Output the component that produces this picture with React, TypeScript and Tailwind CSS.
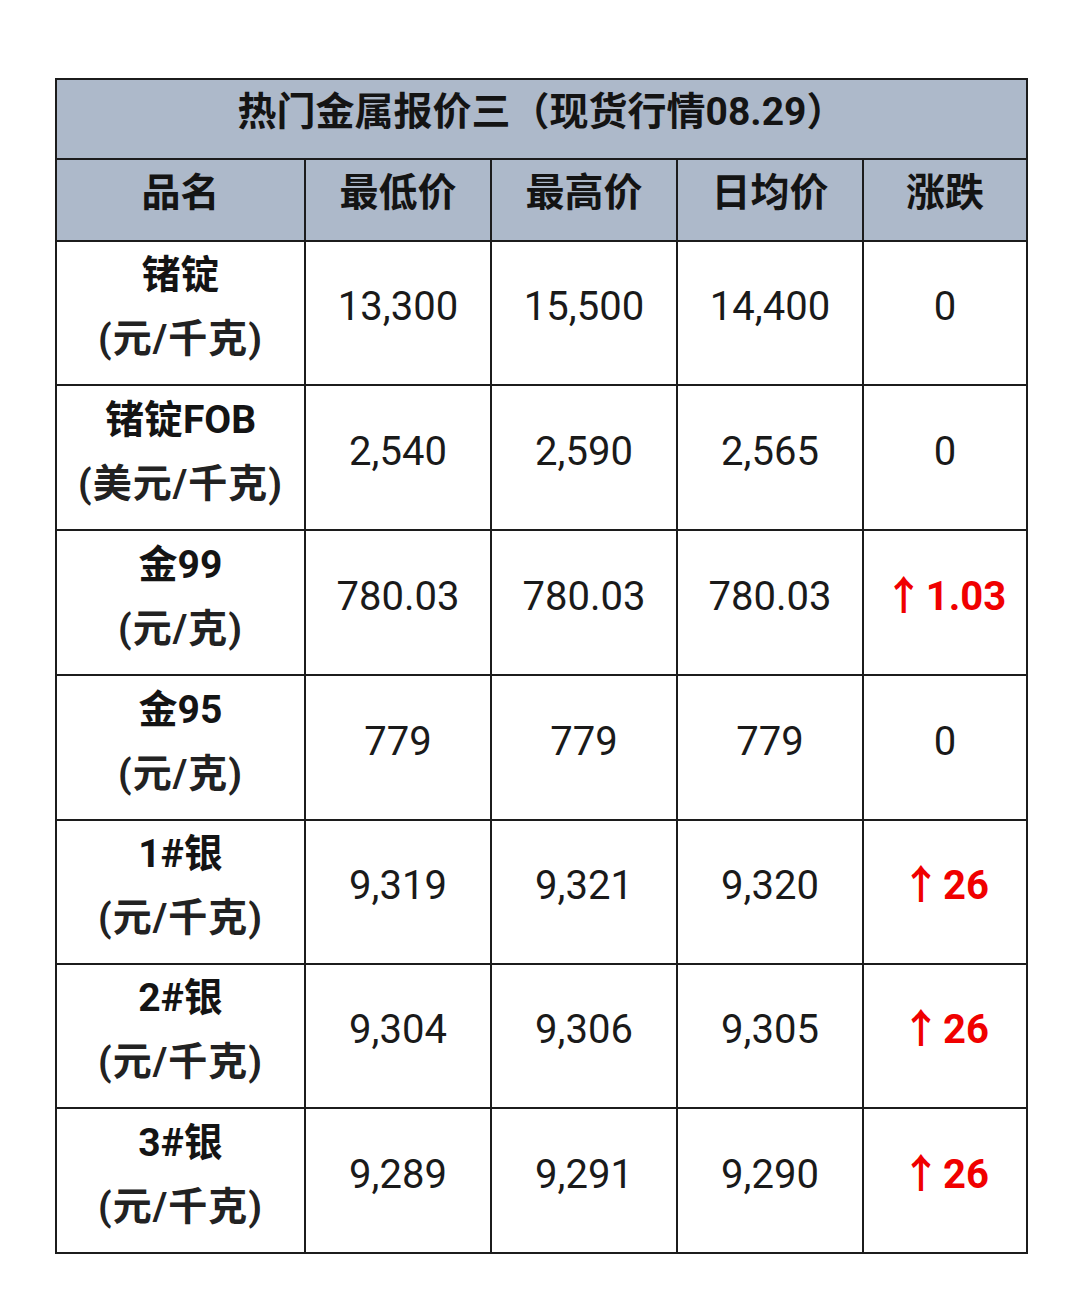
const rows = [
  { name: "锗锭", unit: "(元/千克)", low: "13,300", high: "15,500", avg: "14,400", chg: "0", h: "h-[144px]" },
  { name: "锗锭FOB", unit: "(美元/千克)", low: "2,540", high: "2,590", avg: "2,565", chg: "0", h: "h-[145px]" },
  { name: "金99", unit: "(元/克)", low: "780.03", high: "780.03", avg: "780.03", chg: "1.03", up: true, h: "h-[145px]" },
  { name: "金95", unit: "(元/克)", low: "779", high: "779", avg: "779", chg: "0", h: "h-[145px]" },
  { name: "1#银", unit: "(元/千克)", low: "9,319", high: "9,321", avg: "9,320", chg: "26", up: true, h: "h-[144px]" },
  { name: "2#银", unit: "(元/千克)", low: "9,304", high: "9,306", avg: "9,305", chg: "26", up: true, h: "h-[144px]" },
  { name: "3#银", unit: "(元/千克)", low: "9,289", high: "9,291", avg: "9,290", chg: "26", up: true, h: "h-[145px]" },
];

const font = "font-['Roboto','Noto_Sans_CJK_SC',sans-serif]";
const cell = "border-2 border-[#1c1c1c] text-center";

export default function App() {
  return (
    <div className={`w-[1080px] h-[1300px] bg-white pt-[78px] pl-[55px] ${font}`}>
      <table className="border-collapse border-2 border-[#1c1c1c] w-[971px] table-fixed text-[#141414]">
        <colgroup>
          <col className="w-[249px]" />
          <col className="w-[186px]" />
          <col className="w-[186px]" />
          <col className="w-[186px]" />
          <col className="w-[164px]" />
        </colgroup>
        <thead>
          <tr className="h-[80px] bg-[#adb9ca]">
            <th colSpan={5} className={`${cell} pb-[14px] text-[39px] font-bold`}>
              热门金属报价三（现货行情08.29）
            </th>
          </tr>
          <tr className="h-[82px] bg-[#adb9ca]">
            {["品名", "最低价", "最高价", "日均价", "涨跌"].map((h) => (
              <th key={h} className={`${cell} pb-[14px] text-[39px] font-bold`}>
                {h}
              </th>
            ))}
          </tr>
        </thead>
        <tbody>
          {rows.map((r) => (
            <tr key={r.name} className={r.h}>
              <td className={`${cell} pb-[12px] text-[39px] font-bold leading-[64px]`}>
                <div>{r.name}</div>
                <div className="text-[#222] tracking-[1px]">{r.unit}</div>
              </td>
              {[r.low, r.high, r.avg].map((v, i) => (
                <td key={i} className={`${cell} pb-[12px] text-[40px] text-[#1a1a1a]`}>
                  {v}
                </td>
              ))}
              <td
                className={`${cell} pb-[12px] text-[40px] ${
                  r.up ? "text-[#f00000] font-bold" : "text-[#1a1a1a]"
                }`}
              >
                {r.up ? (
                  <span>
                    <span className="mr-[2px]">↑</span>
                    {r.chg}
                  </span>
                ) : (
                  r.chg
                )}
              </td>
            </tr>
          ))}
        </tbody>
      </table>
    </div>
  );
}
